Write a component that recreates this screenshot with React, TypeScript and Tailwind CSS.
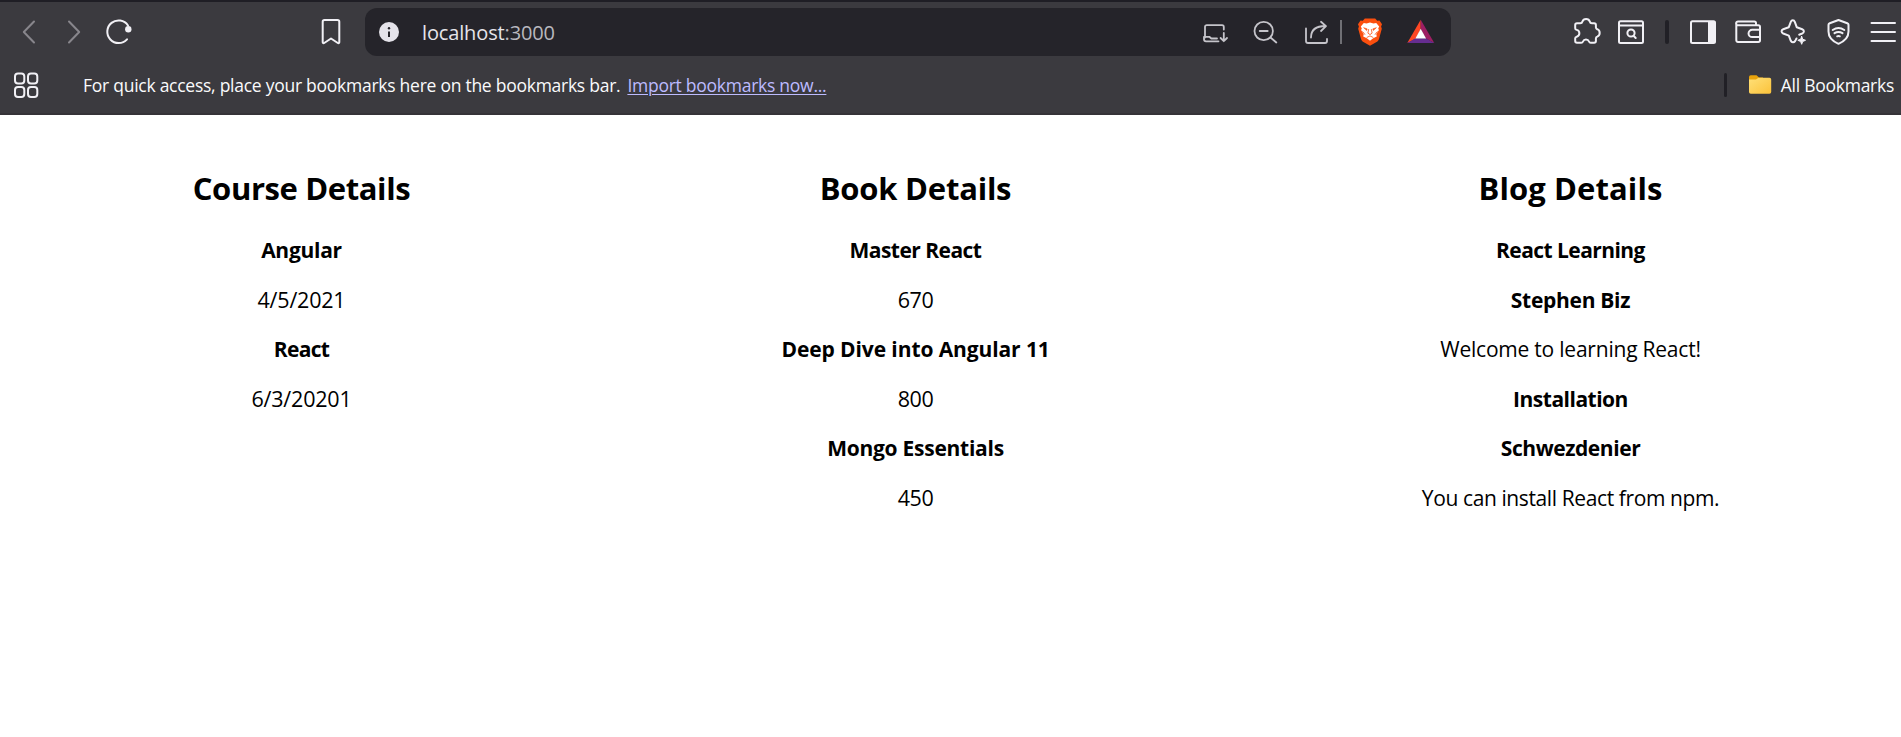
import React from "react";

type GlyphProps = {
  box: [number, number, number, number];
  className?: string;
  strokeWidth?: number;
  children: React.ReactNode;
};

function Glyph({ box, className = "", strokeWidth = 2, children }: GlyphProps) {
  return (
    <svg
      className={"shrink-0 " + className}
      width={box[2]}
      height={box[3]}
      viewBox={box.join(" ")}
      fill="none"
      stroke="currentColor"
      strokeWidth={strokeWidth}
      strokeLinecap="round"
      strokeLinejoin="round"
      aria-hidden="true"
    >
      {children}
    </svg>
  );
}

function AddressBar() {
  return (
    <div className="ml-[21px] flex h-12 w-[1086px] shrink-0 items-center rounded-xl bg-[#25242a] text-[#c5c4ca]">
      <Glyph box={[377, 20, 24, 24]} className="ml-3">
        <circle cx="389" cy="32" r="10" fill="#e5e3ea" stroke="none" />
        <path d="M389 31.5V37" stroke="#25242a" strokeWidth="2" strokeLinecap="butt" />
        <circle cx="389" cy="28.2" r="1.2" fill="#25242a" stroke="none" />
      </Glyph>
      <div className="ml-[21px] w-[599px] pt-px text-[20px] leading-6 tracking-[-0.14px] text-[#e6e5ea]">
        localhost<span className="text-[#b9b8bf]">:3000</span>
      </div>
      <Glyph box={[1201, 16, 28, 32]} className="ml-[180px]" strokeWidth={1.8}>
        <path d="M1205 37.500V27a1.800 1.800 0 0 1 1.800-1.800H1222a1.800 1.800 0 0 1 1.800 1.800V29.500" />
        <path d="M1204 36.800h5.300l2 1.700H1217M1204 37v2.300a2 2 0 0 0 2 2H1218.500" />
        <path d="M1223.800 33V41M1220.600 38l3.200 3.200 3.200-3.200" />
      </Glyph>
      <Glyph box={[1252, 16, 28, 32]} className="ml-[23px]" strokeWidth={1.8}>
        <circle cx="1263.700" cy="31" r="9.200" />
        <path d="M1259.700 31h8M1270.500 37.500l5.800 5" />
      </Glyph>
      <Glyph box={[1303, 16, 28, 32]} className="ml-[23px]" strokeWidth={1.8}>
        <path d="M1306 28.500V41a2 2 0 0 0 2 2H1325a2 2 0 0 0 2-2V39" />
        <path d="M1311 37.500c0-7 4.500-11.500 14.500-11.500M1321 21.800l5 4.400-5 4.800" />
      </Glyph>
      <div className="ml-[9px] h-6 w-0.5 bg-[#707075]" />
      <Glyph box={[1356, 16, 28, 32]} className="ml-3.5">
        <path
          d="M1364.800 18.400h10.400l2 2.300 2.300-.2 2.500 3.700-.9 2.400.7 2.200-2.800 10.300c-.3 1-.8 1.700-1.600 2.300l-7.400 4.300-7.400-4.300c-.8-.6-1.300-1.300-1.600-2.300l-2.800-10.300.7-2.200-.9-2.400 2.500-3.700 2.300.2z"
          fill="#fb4f0e"
          stroke="none"
        />
        <path
          d="M1363.800 22.900l2.700.5 3.500-.9 3.500.9 2.700-.5 3 3.600-1 1.900.7 1.500-2.600 4.300.5 2.300-3.600 1.800-3.200 2.500-3.200-2.500-3.600-1.800.5-2.300-2.600-4.300.7-1.500-1-1.900z"
          fill="#fff"
          stroke="none"
        />
        <path d="M1364 27.800l3.200 1.100-.5 1.300zM1376 27.800l-3.200 1.100.5 1.300z" fill="#fb4f0e" stroke="#fb4f0e" strokeWidth=".6" />
        <path d="M1368.600 29.500l-.7 3.600 2.100 1.500 2.100-1.500-.7-3.600M1367 37.400l3-1.500 3 1.500" stroke="#fb4f0e" strokeWidth=".8" />
        <path d="M1362.700 31.800l2 2.500M1377.300 31.800l-2 2.500" stroke="#fb4f0e" strokeWidth=".9" />
      </Glyph>
      <Glyph box={[1406, 16, 30, 32]} className="ml-[22px]">
        <g stroke="none">
          <path d="M1420.700 19.800L1407.300 43l8.700-4.500 4.700-9.500z" fill="#ff4724" />
          <path d="M1420.700 19.800L1434.300 43l-8.500-4.500-5.100-9.500z" fill="#9e1f63" />
          <path d="M1407.300 43h27l-8.500-4.700H1415.600z" fill="#662d91" />
          <path d="M1420.700 28.700l-5.300 9.700h10.700z" fill="#fff" />
        </g>
      </Glyph>
    </div>
  );
}

function Toolbar() {
  return (
    <div className="flex h-[60px] items-center pl-5 text-[#f1f0f5]">
      <Glyph box={[20, 16, 20, 32]} className="text-[#88868c]">
        <path d="M34 21.500L23.800 32 34 42.500" />
      </Glyph>
      <Glyph box={[64, 16, 20, 32]} className="ml-6 text-[#88868c]">
        <path d="M69 21.500L79.200 32 69 42.500" />
      </Glyph>
      <Glyph box={[104, 16, 30, 32]} className="ml-5">
        <path d="M127 39.300A11.300 11.300 0 1 1 128 25.500" />
        <circle cx="128.300" cy="29.200" r="3.200" fill="currentColor" stroke="none" />
      </Glyph>
      <Glyph box={[318, 16, 26, 32]} className="ml-[184px]">
        <path d="M324.500 20h13a1.800 1.800 0 0 1 1.800 1.800V42.300c0 .9-.8 1.200-1.500.7L331 38.500l-6.800 4.500c-.7.500-1.500.2-1.500-.7V21.800A1.800 1.800 0 0 1 324.500 20z" />
      </Glyph>
      <AddressBar />
      <Glyph box={[1572, 16, 30, 32]} className="ml-[121px]">
        <path d="M1577 23.200h3.300c1.300 0 1.800-.5 2-1.500a4 4 0 0 1 7.600 0c.2 1 .7 1.500 2 1.500h2.200a1.800 1.800 0 0 1 1.800 1.800v2.200c0 1.200.5 1.700 1.300 2a4 4 0 0 1 0 7.400c-.8.300-1.300.8-1.300 2V41a1.800 1.800 0 0 1-1.800 1.800h-3.300c-1 0-1.500-.5-1.800-1.300a3.200 3.200 0 0 0-6 0c-.3.800-.8 1.300-1.800 1.300H1577a1.800 1.800 0 0 1-1.800-1.800V38.300c0-1 .6-1.400 1.500-1.600a3.500 3.500 0 0 0 0-6.800c-.9-.2-1.500-.7-1.500-1.700V25A1.800 1.800 0 0 1 1577 23.200z" />
      </Glyph>
      <Glyph box={[1616, 16, 30, 32]} className="ml-3.5">
        <rect x="1619" y="21.200" width="24" height="21.800" rx="1.500" />
        <path d="M1619 25.500h24" />
        <circle cx="1631" cy="33" r="3.600" />
        <path d="M1633.500 35.700l2.200 2.300" />
      </Glyph>
      <div className="ml-[19px] h-6 w-1 shrink-0 rounded-full bg-[#212026]" />
      <Glyph box={[1688, 16, 30, 32]} className="ml-[19px]">
        <rect x="1691" y="21.200" width="24" height="21.800" rx="1.500" />
        <path d="M1708 21h6.500l.8.800v20.400l-.8.800H1708z" fill="currentColor" stroke="none" />
      </Glyph>
      <Glyph box={[1733, 16, 30, 32]} className="ml-[15px]">
        <path d="M1756 25v-1.800a1.700 1.700 0 0 0-1.700-1.700H1738a1.900 1.900 0 0 0 0 3.800h20.300a1.700 1.700 0 0 1 1.700 1.700V40.300a1.700 1.700 0 0 1-1.700 1.700H1738a1.700 1.700 0 0 1-1.700-1.700V23.500" />
        <path d="M1760 29.800h-7.800a3.400 3.400 0 0 0 0 7.300h7.800" />
      </Glyph>
      <Glyph box={[1778, 16, 30, 32]} className="ml-[15px]">
        <path d="M1796.500 38.500l-1.400 2.600c-1.200 1.800-3.400 1.600-4.300-.3l-2-5.200-5.600-2.100c-2.200-1-2.200-3.300 0-4.200l5.500-2 2.100-5.500c.8-2 3.200-2 4 0l2 5.500 5.400 2c2.200.9 2.300 3.200 0 4.200l-3 1.200" />
        <path d="M1801.700 36.400l1 2.800 2.800 1.100-2.800 1.200-1 2.800-1.100-2.800-2.800-1.200 2.800-1.100z" fill="currentColor" strokeWidth="1" />
      </Glyph>
      <Glyph box={[1824, 16, 30, 32]} className="ml-4">
        <path d="M1838.500 20l8.800 3.200c.8.300 1.200.8 1.200 1.600v6.700c0 6-3.500 9.600-10 12.300c-6.500-2.700-10-6.300-10-12.300v-6.700c0-.8.400-1.300 1.200-1.600z" />
        <path d="M1832.700 30c3.500-2.500 8.100-2.500 11.600 0M1834.500 33.200c2.500-1.600 5.500-1.600 8 0M1837.200 36.300c.8-.4 1.800-.4 2.600 0" />
      </Glyph>
      <Glyph box={[1868, 16, 30, 32]} className="ml-3.5">
        <path d="M1871.500 23h23.500M1871.500 32h23.500M1871.500 41h23.500" />
      </Glyph>
    </div>
  );
}

function BookmarksBar() {
  return (
    <div className="flex h-[45px] items-center text-[17.5px] leading-6 tracking-[-0.26px] text-[#fafafc]">
      <Glyph box={[12, 70, 28, 30]} className="ml-3 text-[#f1f0f5]">
        <rect x="15" y="73.500" width="9.300" height="10" rx="3" />
        <rect x="28" y="73.500" width="9.300" height="10" rx="3" />
        <rect x="15" y="87" width="9.300" height="10" rx="3" />
        <rect x="28" y="87" width="9.300" height="10" rx="3" />
      </Glyph>
      <span className="ml-[43px] whitespace-nowrap">
        For quick access, place your bookmarks here on the bookmarks bar.
      </span>
      <a className="ml-[7px] whitespace-nowrap text-[#bdbbff] underline decoration-1 underline-offset-2">
        Import bookmarks now...
      </a>
      <div className="ml-auto h-6 w-[3px] rounded-full bg-[#212026]" />
      <Glyph box={[1747, 72, 26, 26]} className="ml-5">
        <defs>
          <linearGradient id="folder" x1="0" y1="0" x2="1" y2="1">
            <stop offset="0" stopColor="#ffe078" />
            <stop offset="1" stopColor="#fbc23a" />
          </linearGradient>
        </defs>
        <path d="M1749 77a1.800 1.800 0 0 1 1.800-1.800h5.700l2.500 2.300h4V84h-14z" fill="#e8a30c" stroke="none" />
        <path d="M1749 79.500h7l2.500-1.700H1769.500a1.700 1.700 0 0 1 1.700 1.700V92a1.800 1.800 0 0 1-1.800 1.800H1750.800A1.800 1.800 0 0 1 1749 92z" fill="url(#folder)" stroke="none" />
      </Glyph>
      <span className="mr-[7px] ml-2 whitespace-nowrap">All Bookmarks</span>
    </div>
  );
}

function Title({ className, children }: { className: string; children: React.ReactNode }) {
  return <h1 className={"mb-[13px] text-[31px] leading-[48px] font-bold " + className}>{children}</h1>;
}

function Name({ className, children }: { className: string; children: React.ReactNode }) {
  return <h3 className={"h-[49.5px] pt-px text-[21px] leading-[49.5px] font-bold " + className}>{children}</h3>;
}

function Line({ className, children }: { className: string; children: React.ReactNode }) {
  return <p className={"h-[49.5px] leading-[49.5px] " + className}>{children}</p>;
}

export default function App() {
  return (
    <div className="flex h-[737px] w-[1901px] flex-col overflow-hidden bg-white font-['Open_Sans','Noto_Sans',sans-serif]">
      <header className="h-[115px] shrink-0 border-t-2 border-b-2 border-t-[#1f1e25] border-b-[#353338] bg-[#3b3a3f]">
        <Toolbar />
        <BookmarksBar />
      </header>
      <main className="flex pt-[49px] pl-[192.5px] text-center whitespace-nowrap text-black">
        <section className="w-[218px]">
          <Title className="tracking-[-0.39px]">Course Details</Title>
          <Name className="tracking-[-0.27px]">Angular</Name>
          <Line className="text-[21.5px] tracking-[-0.2px]">4/5/2021</Line>
          <Name className="tracking-[-0.7px]">React</Name>
          <Line className="text-[21.5px] tracking-[-0.2px]">6/3/20201</Line>
        </section>
        <section className="ml-[371px] w-[268px]">
          <Title className="tracking-[-0.22px]">Book Details</Title>
          <Name className="tracking-[-0.53px]">Master React</Name>
          <Line className="text-[21.5px] tracking-[-0.4px]">670</Line>
          <Name className="tracking-[-0.1px]">Deep Dive into Angular 11</Name>
          <Line className="text-[21.5px] tracking-[-0.4px]">800</Line>
          <Name className="tracking-[-0.26px]">Mongo Essentials</Name>
          <Line className="text-[21.5px] tracking-[-0.4px]">450</Line>
        </section>
        <section className="ml-[371px] w-[300px]">
          <Title className="tracking-[0.09px]">Blog Details</Title>
          <Name className="tracking-[-0.56px]">React Learning</Name>
          <Name className="tracking-[-0.29px]">Stephen Biz</Name>
          <Line className="pt-px text-[21px] tracking-[-0.22px]">Welcome to learning React!</Line>
          <Name className="tracking-[-0.5px]">Installation</Name>
          <Name className="tracking-[-0.43px]">Schwezdenier</Name>
          <Line className="pt-px text-[21px] tracking-[-0.39px]">You can install React from npm.</Line>
        </section>
      </main>
    </div>
  );
}
